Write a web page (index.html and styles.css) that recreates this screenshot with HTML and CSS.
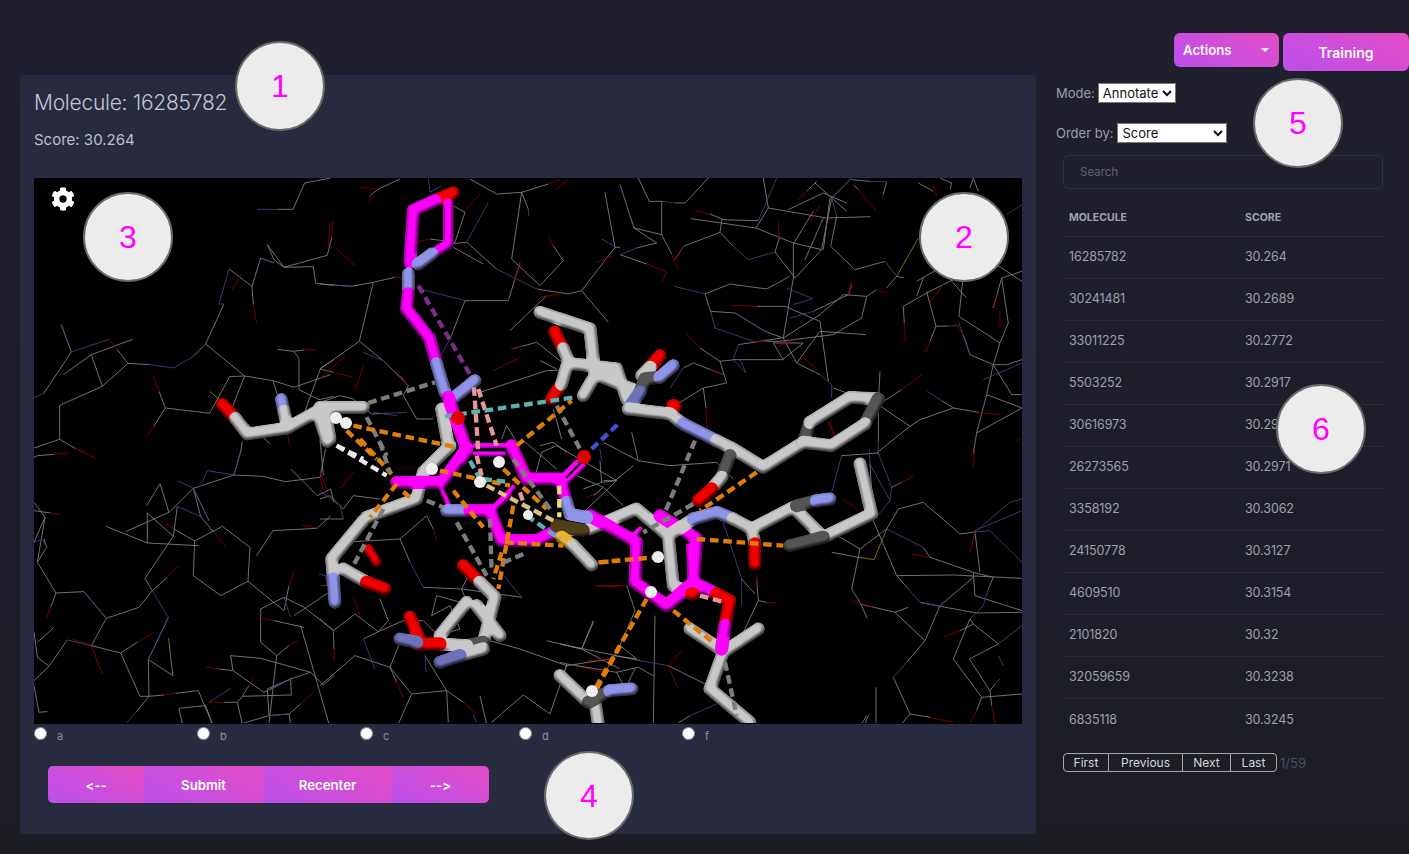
FILE: index.html
```html
<!DOCTYPE html>
<html lang="en">
<head>
<meta charset="utf-8">
<title>Molecule annotation</title>
<link rel="stylesheet" href="styles.css">
</head>
<body>
<div class="page">
  <main class="panel">
    <h1 class="title">Molecule: 16285782</h1>
    <p class="score">Score: 30.264</p>
    <div class="viewer">
      <svg class="scene" viewBox="34 179 988 545" width="988" height="545" aria-hidden="true">
        <defs>
          <filter id="tube" x="0" y="0" width="1409" height="854" filterUnits="userSpaceOnUse" color-interpolation-filters="sRGB">
            <feGaussianBlur in="SourceAlpha" stdDeviation="2.2" result="b"/>
            <feDiffuseLighting in="b" surfaceScale="4.5" diffuseConstant="1.12" lighting-color="#ffffff" result="s">
              <feDistantLight azimuth="250" elevation="72"/>
            </feDiffuseLighting>
            <feComposite in="s" in2="SourceGraphic" operator="arithmetic" k1="1" k2="0" k3="0" k4="0" result="lit"/>
            <feComposite in="lit" in2="SourceAlpha" operator="in"/>
          </filter>
        </defs>

        <!-- wireframe protein -->
        <g class="wires">
          <g transform="translate(34 179) scale(.3333)">
            <path class="w" d="M730 94H777L812 15L890 0M700 200L750 268L880 232L893 180M700 200L720 245L750 268L838 266L845 316L900 322M720 255L680 240M654 325L585 273M654 325L680 240M654 325L658 380M570 378L515 498L478 535M515 498L632 594L590 700M632 594L587 596L527 706L394 690L360 745M394 690L375 640M632 594L717 608L780 628L860 600L890 590M717 608L730 650M730 514L778 520L795 540L795 635L855 665L900 655M778 520L810 516M345 560L282 556L205 625L172 530L296 484M172 530L88 590M205 625L77 682L77 784L0 810M77 784L125 812M282 556L250 515M112 522L82 440M112 522L60 600L30 645M860 570L800 735M860 570L900 545M527 640L710 798M625 790L620 825"/>
            <path class="b" d="M670 94H730M680 240L720 255M585 273L555 378L570 378M345 560L420 570L478 535M225 484L112 522M82 440L100 490M30 645L0 660M77 682L130 660"/>
            <path class="r" d="M893 180L898 130M622 288L595 335M658 380L668 437M250 515L225 484M125 812L150 825M360 745L335 778M375 640L358 595M810 516L845 514M760 760L767 805"/>
          </g>
          <g transform="translate(34 450) scale(.3333)">
            <path class="w" d="M0 25L10 20L60 16M0 160L33 205L10 340L66 432L150 428L217 508L315 475L355 425L400 385M0 185L50 192M33 205L0 280M10 340L38 295L30 270M66 432L50 475M217 508L172 590M172 590L260 612L310 580M260 612L318 742L345 742L390 738M425 733L493 725L535 825M345 742L343 632L403 505M343 632L417 680L410 625M355 425L333 388L418 262L430 172M500 203L540 250M500 203L478 118L525 215M478 118L600 78L622 0M600 78L685 82L755 98L858 85L875 0M770 60L850 140L890 120L900 160M478 118L405 190L378 104L338 170M405 190L277 247M340 192L340 282L216 232M340 282L493 290M340 192L418 262M420 240L482 276L565 232L648 295L642 397L560 440L478 380L482 276M642 397L750 485L765 410M750 445L680 480L680 580L728 620L705 825M720 515L810 535M728 620L765 590M750 445L810 475L900 545M800 530L885 825M780 500L900 420M668 320L717 245L850 238L890 200M590 620L680 628L830 670L868 708L900 680M590 620L597 665L555 660M597 665L690 730L770 690L772 738L625 742L645 710M625 742L610 760L570 760M610 760L625 825M515 770L435 778L445 825M515 770L535 825M770 690L700 720L705 800L765 795L770 825M705 800L620 825M765 795L800 765M830 670L770 690M0 548L10 625L45 652L100 573M45 652L0 695M10 580L60 535M0 710L15 790L40 788M345 742L305 790"/>
            <path class="b" d="M430 172L500 203M430 95L478 118L525 215M505 100L520 65L600 78M622 0L600 78M150 428L217 508M355 425L403 505M403 505L343 632M100 573L172 590M0 280L25 270L38 295M855 375L875 380L880 410L860 410M750 445L770 505M700 720L770 690M705 800L765 795M525 760L590 718M305 790L275 825"/>
            <path class="r" d="M60 16L105 12M130 0L185 28M50 192L80 198M400 385L432 352M50 475L38 507M172 590L115 570M310 580L358 550M390 738L425 733M395 226L420 240M540 250L577 295M765 410L782 362M675 505L720 515M765 590L790 575M850 238L805 228M858 85L873 140M555 660L515 655M645 710L660 685M570 760L525 760M800 765L835 735M172 590L205 675"/>
            <path class="g" d="M410 625L404 567"/>
          </g>
          <g transform="translate(320 180) scale(.3333)">
            <path class="w" d="M0 315L95 322L160 310L225 295M160 310L118 487L0 570M118 487L190 545L265 620L250 650L290 720L340 720M175 30L240 0M175 30L150 50M530 45L605 40L685 15M450 0L530 45M605 40L575 240M605 40L625 90M385 195L440 190L530 270M650 330L745 345L785 335L865 430M785 335L885 205L855 40M885 205L900 205M400 205L490 255M435 100L405 190L330 180M435 100L380 70M575 240L660 320L730 245L700 200M600 250L565 365L435 365M435 365L390 480M570 455L680 350M0 570L40 580M575 510L650 490L720 545L900 590M660 545L710 570M480 640L680 575L820 570M100 660L155 705L200 703M660 800L700 790L740 820M700 690L725 780M545 780L560 740L590 790M240 590L265 620M0 670L60 650L100 660"/>
            <path class="b" d="M325 0L330 40L365 20M625 90L627 112M530 270L650 330M505 70L440 190M435 365L300 330M390 480L365 525M200 703L260 700M95 322L40 318M190 545L130 520M160 700L230 710M845 180L890 205"/>
            <path class="r" d="M175 30L120 25M150 50L150 70M685 15L720 0M745 0L710 30M330 180L270 195M480 45L430 100M600 250L580 310M700 200L685 175M660 355L720 345M40 580L100 595M75 530L0 600M130 560L105 635M225 575L265 620M520 575L600 535M610 500L575 510M30 130L25 200M50 208L105 260M225 292L245 298M830 250L880 230"/>
          </g>
          <g transform="translate(320 440) scale(.3333)">
            <path class="w" d="M0 0L10 110M0 180L30 170L70 210L100 170L180 180M240 300L70 310M240 300L320 230L340 270M240 300L270 370M310 445L425 450L605 475M425 450L455 390M425 450L440 490M350 470L335 530L390 500L420 570L355 590M350 470L440 495M0 540L40 575L105 525L175 578L250 545L310 545L345 580M40 575L42 630M175 578L205 545L180 480M130 600L175 578M105 650L0 740M105 650L210 685L240 610M210 685L230 730M210 685L275 765L380 755L315 650M380 755L430 790M275 765L235 855M380 755L385 850M490 600L600 630L740 680L870 660M740 680L690 825L610 768L515 850M480 770L500 855M680 605L785 630L820 545M785 630L900 690M605 0L710 90M640 130L665 40L710 20L830 90L890 125M790 150L845 130L890 125L780 230M840 65L845 130M0 240L70 240"/>
            <path class="b" d="M0 155L60 200L70 240M270 370L310 445M130 600L165 690M520 370L605 475M315 650L318 700M840 30L845 65M460 825L470 850"/>
            <path class="r" d="M0 100L20 150M100 100L60 150M340 270L350 305M455 390L475 350M42 630L42 665M230 730L250 775M430 790L470 825M100 475L120 530M770 680L850 700M800 665L870 660M830 440L900 445M800 175L835 160"/>
          </g>
          <g transform="translate(560 300) scale(.3333)">
            <path class="w" d="M130 430L235 485L330 500L470 490L520 540M235 485L215 400M130 545L165 545L220 500M130 565L190 620M100 590L130 565L50 530M545 840L585 885M590 840L595 905L620 910M595 905L550 1000M285 950L280 1275M100 970L65 1050L0 1035L240 1085M325 1100L435 1155M170 1120L235 1105L280 1130M200 860L225 935L180 1040L230 1080L160 1070M180 1040L130 1130M20 1095L170 1120L195 1170L225 1110M0 1090L20 1095L5 1150M390 1250L350 1275M915 1275L925 1250"/>
            <path class="b" d="M480 640L545 840L545 920M240 1085L325 1100M470 1215L390 1250"/>
            <path class="r" d="M620 910L650 912M200 860L105 860M325 1100L355 1170M325 1100L365 1055M810 370L825 415M590 830L590 860"/>
          </g>
          <g transform="translate(620 179) scale(.3333)">
            <path class="w" d="M55 0L88 70L125 70M165 75L195 75L265 0M0 20L42 150L125 170L125 70M42 150L110 195L50 210M0 230L80 258M125 170L155 228M190 205L165 245M190 205L300 163L305 125L415 128M212 122L408 150L445 90L430 0M270 108L310 125M445 90L620 120L752 116M408 150L520 195L605 215L635 60L695 0M300 163L340 205M465 222L478 180M465 222L525 300L605 215M520 195L520 300L490 480L600 410L670 350L740 355L725 420L640 470L480 490L440 490M255 348L330 318L440 333L510 295M255 348L272 400L345 405L435 460L490 480M410 385L495 385L600 430L625 610M580 400L685 350L695 320M705 275L795 250M705 275L632 205L650 115M490 480L530 555L600 590M485 480L355 500M340 545L488 545L550 495L460 495L490 545M600 460L738 470M600 460L530 555M240 510L300 550L345 545M300 550L320 615L250 630L120 710M190 570L220 555L310 590M250 630L258 690M640 630L775 680L780 580M775 680L845 635M775 680L870 745L900 725L1000 690L1075 703M870 745L770 825M1000 690L965 668M775 700L775 790M740 355L770 335M850 385L920 345L1030 290M850 385L853 435M830 295L850 300M800 330L830 295M920 340L948 445L985 444M948 445L930 490M1030 290L1017 415L1140 495L1165 435L1145 300L1206 280M1140 495L1120 560L1050 530L1030 470M1120 560L1160 560L1206 545M1120 560L1100 650L1206 690M1100 650L1070 765L1060 825M1070 765L1206 690M1120 560L1175 650L1206 650M895 15L940 40M1050 30L1060 0L1075 40M990 35L995 15L960 0M590 10L560 40M585 15L680 100M505 95L610 45L680 75M630 60L610 215M695 5L750 10M800 12L790 50M700 20L715 35M580 100L522 195M610 120L555 245M890 310L960 270L1040 360M890 355L910 300M1130 260L1206 310M1120 390L1145 300"/>
            <path class="b" d="M125 70L165 75M0 20L20 80M50 210L0 230M415 128L470 0M340 205L385 245L465 222M162 325L255 348M345 405L435 460M272 400L285 450L400 490M500 330L578 362L520 380M510 420L580 400M355 500L340 545L378 585L360 545M600 590L635 620L635 660M635 60L650 115M750 10L800 12M795 250L830 295M985 444L1015 443M1015 430L1050 530M1090 605L1206 555M1120 560L1110 565M922 640L965 668M190 570L150 630M1206 80L1160 110M775 790L775 825"/>
            <path class="r" d="M80 258L140 282M155 228L175 278M165 245L190 205M140 282L125 315M225 97L270 108M478 180L475 130M335 382L410 385M400 490L440 490M475 505L520 485M540 530L592 575M198 465L240 510M270 575L310 590M258 690L262 750M845 635L905 590M1075 703L1140 710M625 730L645 780M685 350L695 310M770 335L800 345M853 435L857 490M930 490L915 525M925 380L970 320M1003 430L1030 470M1118 390L1135 345M1140 400L1140 450M598 85L570 130M535 65L560 40M715 35L770 100M790 50L785 62M940 20L950 55M1200 780L1190 790"/>
            <path class="g" d="M830 295L895 180"/>
          </g>
          <g transform="translate(780 450) scale(.3333)">
            <path class="w" d="M185 20L295 12M335 115L365 100M270 45L280 215L350 380L385 420M355 180L430 160L540 255L590 248M355 180L320 240L240 300L215 420L240 460L262 508M175 262L240 300M155 310L235 325M430 295L450 325L580 370L640 385L625 420M350 380L520 378L726 388M580 370L585 440L726 485M420 460L480 472M480 472L590 492L726 490M580 385L480 470L435 575L380 640M340 685L390 795L450 805M240 465L345 490L385 475M345 490L435 575M570 510L520 630L605 745L590 785M570 510L580 525L540 545M580 525L655 585L568 630L630 725L645 705M630 725L635 770M605 745L726 735M288 715L288 825M260 800L245 825M390 795L365 825M585 250L600 370"/>
            <path class="b" d="M185 20L155 130M268 0L270 45L330 155L335 115L295 12M330 155L280 215M320 240L430 295M385 420L420 460L480 472M380 640L340 685M590 248L630 245L726 340M585 245L726 185M595 240L690 160L726 150M625 420L610 470L570 510M655 585L726 530M655 620L670 650M645 705L660 690"/>
            <path class="r" d="M365 100L400 82M190 150L235 185M395 315L450 325M215 455L280 475M585 250L570 310M540 545L490 565M450 805L520 820M590 785L570 825M635 770L645 825M585 0L578 55"/>
            <path class="g" d="M320 240L282 332L235 325"/>
          </g>
        </g>

        <!-- stick model -->
        <g class="model" filter="url(#tube)">
          <g transform="translate(560 300) scale(.3333)">
            <path class="c" d="M90 690L230 630L325 710"/>
            <path class="c" d="M325 710L340 860L395 885"/>
            <path class="c" d="M595 990L490 1060L450 1170L570 1270M390 990L480 1050"/>
            <path class="m" d="M90 650L230 730L225 850L320 920L400 850L410 720L300 650"/>
            <path class="m thin" d="M385 740L390 835M240 690L215 715"/>
            <path class="m" d="M400 850L470 885M320 920L370 880"/>
            <path class="o" d="M470 885L510 905L495 980"/>
            <path class="m" d="M495 980L485 1050"/>
            <path class="c" d="M325 710L400 660"/>
            <path class="n" d="M400 660L470 640L520 660"/>
            <path class="c" d="M520 660L575 690L700 625L790 715L935 645L900 495M575 690L585 735M0 700L40 690"/>
            <path class="o" d="M585 735L585 795"/>
            <path class="d" d="M790 715L690 740M710 620L770 605"/>
            <path class="n" d="M770 605L810 600"/>
            <path class="o" d="M395 885L400 885M300 170L270 205"/>
            <path class="c" d="M0 60L90 90L105 225M40 195L170 210L200 300M105 225L240 280M270 205L245 230"/>
            <path class="d" d="M240 280L255 240L300 235"/>
            <path class="n" d="M300 235L340 200"/>
            <path class="o small" d="M340 320L345 322"/>
            <path class="n dim" d="M240 280L205 330"/>
            <path class="c" d="M205 330L330 345L370 375"/>
            <path class="n" d="M370 375L470 425"/>
            <path class="c" d="M470 425L520 450L610 505L730 430"/>
            <path class="d" d="M730 430L750 370"/>
            <path class="c" d="M750 370L870 295L955 300"/>
            <path class="d" d="M955 300L915 375"/>
            <path class="c" d="M915 375L815 440L730 430"/>
            <path class="d" d="M510 470L485 535"/>
            <path class="c" d="M485 535L455 570"/>
            <path class="o" d="M455 570L415 605"/>
            <path class="c" d="M0 1130L85 1210M105 1210L115 1275"/>
            <path class="d" d="M85 1210L150 1175"/>
            <path class="n" d="M150 1175L215 1170"/>
          </g>
          <g transform="translate(320 440) scale(.3333)">
            <path class="c" d="M130 245L35 360L40 420"/>
            <path class="n" d="M40 420L45 490"/>
            <path class="o small2" d="M145 330L170 370"/>
            <path class="c" d="M70 390L140 430"/>
            <path class="o" d="M140 430L195 450"/>
            <path class="c" d="M140 235L290 180L310 100L390 20"/>
            <path class="c" d="M440 490L360 590M470 500L540 590"/>
            <path class="o" d="M430 380L480 430"/>
            <path class="c" d="M480 430L525 475L490 610"/>
            <path class="d" d="M490 610L440 620"/>
            <path class="c" d="M440 620L360 615"/>
            <path class="o" d="M270 535L295 590M360 615L290 615"/>
            <path class="n dim" d="M240 600L290 610"/>
            <path class="c" d="M490 630L420 650"/>
            <path class="n dim" d="M420 650L360 670"/>
            <path class="m" d="M230 130L365 130L440 30"/>
            <path class="m thin" d="M465 20L575 20M465 45L550 45M360 140L385 195M510 215L580 145M530 205L570 170"/>
            <path class="m" d="M575 20L620 120L720 120L740 190M510 215L545 305M545 305L650 305L700 280"/>
            <path class="n" d="M380 215L450 215"/>
            <path class="m" d="M450 215L510 215"/>
            <path class="m thin" d="M720 120L770 70M735 135L790 80"/>
            <path class="n" d="M740 190L750 225L800 235"/>
            <path class="brown" d="M710 260L790 275"/>
            <path class="gold" d="M725 295L760 320"/>
            <path class="c" d="M760 320L815 378"/>
          </g>
          <g transform="translate(320 180) scale(.3333)">
            <path class="c" d="M660 400L810 450L825 590"/>
            <path class="c" d="M825 590L790 650"/>
            <path class="o" d="M705 460L730 510M725 615L695 660"/>
            <path class="c" d="M730 510L745 545L725 615"/>
            <path class="c" d="M365 690L385 800"/>
            <path class="c" d="M0 685L130 685M15 690L30 780"/>
            <path class="o" d="M400 42L345 65"/>
            <path class="m" d="M345 65L280 95L270 250"/>
            <path class="m thin2" d="M385 75L385 195L330 230"/>
            <path class="n" d="M335 225L295 255M265 285L265 330"/>
            <path class="m" d="M265 345L260 390L330 480L350 555"/>
            <path class="n" d="M350 555L375 640M410 650L465 605"/>
            <path class="m" d="M385 655L440 810L425 840"/>
          </g>
          <g transform="translate(34 179) scale(.3333)">
            <path class="o" d="M565 680L605 722"/>
            <path class="c" d="M605 722L640 768L760 750L850 700L880 790"/>
            <path class="n" d="M742 665L750 700"/>
            <path class="c" d="M750 700L760 750"/>
          </g>
        </g>

        <!-- dashed contacts -->
        <g class="dashes">
          <g transform="translate(320 180) scale(.3333)">
            <path class="dash purple" d="M295 320L455 595"/>
            <path class="dash pink" d="M462 625L475 820M475 630L530 800"/>
            <path class="dash teal" d="M375 712L765 655"/>
            <path class="dash grey" d="M145 672L345 610M140 715L200 830M710 680L780 810"/>
            <path class="dash orange" d="M100 740L410 805M590 800L755 665M80 755L170 840"/>
            <path class="dash white" d="M50 800L130 840"/>
            <path class="dash blue" d="M815 810L900 730"/>
          </g>
          <g transform="translate(320 440) scale(.3333)">
            <path class="dash orange" d="M120 0L215 105M230 135L150 235M360 95L570 140M400 155L490 265M580 200L535 450M555 310L730 320M545 340L520 420M550 90L680 210M840 370L900 365M900 620L820 770M270 175L240 150"/>
            <path class="dash grey" d="M180 10L210 100M320 185L370 205M410 250L500 410M190 210L100 380M510 240L515 400M610 345L540 375M580 60L690 210"/>
            <path class="dash white" d="M50 20L200 110"/>
            <path class="dash tan" d="M500 140L700 245"/>
            <path class="dash teal" d="M450 65L480 120M490 120L570 130M620 230L720 300"/>
            <path class="dash pink" d="M470 50L485 110M600 160L610 190"/>
            <path class="dash yellow" d="M718 140L718 235"/>
          </g>
          <g transform="translate(560 300) scale(.3333)">
            <path class="dash grey" d="M405 425L315 640M400 615L250 700M495 1090L530 1250"/>
            <path class="dash orange" d="M590 520L420 635M410 720L670 740M115 790L285 775M260 900L105 1170M340 935L465 1035"/>
            <path class="dash pink" d="M420 890L495 910"/>
          </g>
        </g>

        <!-- atoms -->
        <g class="atoms">
          <circle class="h" cx="336" cy="419" r="6"/>
          <circle class="h" cx="346" cy="424" r="6"/>
          <circle class="h" cx="432" cy="470" r="6"/>
          <circle class="h" cx="480" cy="483" r="6"/>
          <circle class="h" cx="499" cy="463" r="6"/>
          <circle class="h" cx="528" cy="516" r="5"/>
          <circle class="h" cx="658" cy="558" r="6"/>
          <circle class="h" cx="651" cy="593" r="6"/>
          <circle class="h" cx="592" cy="692" r="6"/>
          <circle class="ox" cx="458" cy="419" r="7"/>
          <circle class="ox" cx="584" cy="458" r="7"/>
        </g>
      </svg>
      <svg class="gear" viewBox="0 0 512 512" width="24" height="24" aria-hidden="true">
        <path d="M487.4 315.7l-42.6-24.6c4.3-23.2 4.3-47 0-70.2l42.6-24.6c4.9-2.8 7.1-8.6 5.5-14-11.1-35.6-30-67.8-54.7-94.6-3.8-4.1-10-5.1-14.8-2.3L380.8 110c-17.9-15.4-38.5-27.3-60.8-35.1V25.8c0-5.6-3.9-10.5-9.4-11.7-36.7-8.2-74.3-7.8-109.2 0-5.5 1.2-9.4 6.1-9.4 11.7V75c-22.2 7.9-42.8 19.8-60.8 35.1L88.7 85.5c-4.9-2.8-11-1.9-14.8 2.3-24.7 26.7-43.6 58.9-54.7 94.6-1.7 5.4.6 11.2 5.5 14L67.3 221c-4.3 23.2-4.3 47 0 70.2l-42.6 24.6c-4.9 2.8-7.1 8.6-5.5 14 11.1 35.6 30 67.8 54.7 94.6 3.8 4.1 10 5.1 14.8 2.3l42.6-24.6c17.9 15.4 38.5 27.3 60.8 35.1v49.2c0 5.6 3.9 10.5 9.4 11.7 36.7 8.2 74.3 7.8 109.2 0 5.5-1.2 9.4-6.1 9.4-11.7v-49.2c22.2-7.9 42.8-19.8 60.8-35.1l42.6 24.6c4.9 2.8 11 1.9 14.8-2.3 24.7-26.7 43.6-58.9 54.7-94.6 1.5-5.5-.7-11.3-5.6-14.1zM256 336c-44.1 0-80-35.9-80-80s35.9-80 80-80 80 35.9 80 80-35.9 80-80 80z"/>
      </svg>
    </div>
    <div class="choices">
      <label class="choice"><input type="radio" name="answer"><span>a</span></label>
      <label class="choice"><input type="radio" name="answer"><span>b</span></label>
      <label class="choice choice-narrow"><input type="radio" name="answer"><span>c</span></label>
      <label class="choice"><input type="radio" name="answer"><span>d</span></label>
      <label class="choice"><input type="radio" name="answer"><span>f</span></label>
    </div>
    <div class="btn-group">
      <button class="seg seg-prev">&lt;--</button>
      <button class="seg seg-submit">Submit</button>
      <button class="seg seg-recenter">Recenter</button>
      <button class="seg seg-next">--&gt;</button>
    </div>
  </main>

  <aside class="side">
    <div class="top-actions">
      <button class="grad-btn actions">Actions<span class="caret"></span></button>
      <button class="grad-btn training">Training</button>
    </div>
    <div class="field field-mode">
      <label>Mode:</label>
      <select class="sel sel-mode"><option>Annotate</option></select>
    </div>
    <div class="field field-order">
      <label>Order by:</label>
      <select class="sel sel-order"><option>Score</option></select>
    </div>
    <input class="search" type="text" placeholder="Search">
    <table class="list">
      <thead><tr><th class="col-id">MOLECULE</th><th>SCORE</th></tr></thead>
      <tbody>
        <tr><td>16285782</td><td>30.264</td></tr>
        <tr><td>30241481</td><td>30.2689</td></tr>
        <tr><td>33011225</td><td>30.2772</td></tr>
        <tr><td>5503252</td><td>30.2917</td></tr>
        <tr><td>30616973</td><td>30.2967</td></tr>
        <tr><td>26273565</td><td>30.2971</td></tr>
        <tr><td>3358192</td><td>30.3062</td></tr>
        <tr><td>24150778</td><td>30.3127</td></tr>
        <tr><td>4609510</td><td>30.3154</td></tr>
        <tr><td>2101820</td><td>30.32</td></tr>
        <tr><td>32059659</td><td>30.3238</td></tr>
        <tr><td>6835118</td><td>30.3245</td></tr>
      </tbody>
    </table>
    <div class="pager">
      <div class="pager-btns">
        <button class="pg pg-first">First</button><button class="pg pg-prev">Previous</button><button class="pg pg-next">Next</button><button class="pg pg-last">Last</button>
      </div>
      <span class="pager-count">1/59</span>
    </div>
  </aside>

  <div class="mark mark-1">1</div>
  <div class="mark mark-2">2</div>
  <div class="mark mark-3">3</div>
  <div class="mark mark-4">4</div>
  <div class="mark mark-5">5</div>
  <div class="mark mark-6">6</div>
</div>
</body>
</html>
```
FILE: styles.css
```css
* { box-sizing: border-box; }
html, body { margin: 0; height: 100%; }
body {
  background: linear-gradient(180deg, #1f1f2d 0%, #1e1e2a 70%, #1c1c23 100%);
  font-family: Inter, "Noto Sans", "Liberation Sans", sans-serif;
  font-variant-ligatures: none;
  font-feature-settings: "calt" 0, "liga" 0;
  color: #b9bbc6;
  overflow: hidden;
}
.page {
  position: relative;
  width: 1409px;
  height: 854px;
  display: flex;
  align-items: flex-start;
  padding: 75px 0 0 20px;
}
.panel {
  width: 1016px;
  height: 759px;
  background: #282b3f;
  border-radius: 4px;
  padding: 14px 14px 0;
  flex: none;
}
.title {
  margin: 0;
  font-size: 21px;
  line-height: 28px;
  font-weight: 300;
  letter-spacing: -.25px;
  color: #c4c6d2;
}
.score {
  margin: 12px 0 0;
  font-size: 15px;
  line-height: 22px;
  color: #bcbec9;
}
.viewer {
  position: relative;
  margin-top: 27px;
  width: 988px;
  height: 546px;
  background: #000;
  overflow: hidden;
}
.scene { display: block; }
.gear {
  position: absolute;
  left: 17px;
  top: 9px;
  fill: #fff;
}
.wires path { fill: none; stroke-width: 2.7; stroke-linejoin: round; }
.wires .w { stroke: #7d7d7d; }
.wires .b { stroke: #40407c; }
.wires .r { stroke: #850000; }
.wires .g { stroke: #8a7322; }
.model path { fill: none; stroke-width: 40; stroke-linecap: round; stroke-linejoin: round; }
.model .c { stroke: #c8c8c8; }
.model .m { stroke: #ff00ff; }
.model .n { stroke: #8f94e8; }
.model .dim { stroke: #6e72b8; }
.model .o { stroke: #f00000; }
.model .d { stroke: #555555; }
.model .brown { stroke: #4f4019; }
.model .gold { stroke: #ecb234; }
.model .thin { stroke-width: 16; }
.model .thin2 { stroke-width: 33; }
.model .small { stroke-width: 42; }
.model .small2 { stroke-width: 30; }
.dash { fill: none; stroke-width: 13; stroke-dasharray: 26 14; }
.orange { stroke: #e07c08; }
.grey { stroke: #7d7d7d; }
.white { stroke: #e8e8e8; }
.teal { stroke: #5cb0b0; }
.pink { stroke: #e89898; }
.purple { stroke: #7a2e85; }
.blue { stroke: #3f51d8; }
.tan { stroke: #e0c080; }
.yellow { stroke: #e8e070; }
.atoms .h { fill: #eeeeee; }
.atoms .ox { fill: #e00000; }

.choices {
  display: flex;
  height: 20px;
  align-items: center;
  padding-top: 1px;
}
.choice {
  width: 163px;
  display: flex;
  align-items: center;
  gap: 10px;
  font-size: 11px;
  color: #8b8e9e;
}
.choice span { position: relative; top: 1px; }
.choice-narrow { width: 159px; }
.choice input {
  margin: 0;
  width: 13px;
  height: 13px;
  position: relative;
  top: -1px;
  accent-color: #fff;
}
.btn-group {
  display: flex;
  margin: 22px 0 0 14px;
  width: 441px;
  height: 37px;
  border-radius: 5px;
  overflow: hidden;
}
.seg, .grad-btn {
  border: 0;
  color: #fff;
  font-family: inherit;
  font-feature-settings: "calt" 0, "liga" 0;
  font-variant-ligatures: none;
  font-weight: 600;
  font-size: 13.2px;
  background: linear-gradient(30deg, #bb50ec 0%, #e34cc5 100%);
}
.seg-prev { width: 96px; }
.seg-submit { width: 119px; }
.seg-recenter { width: 129px; }
.seg-next { width: 97px; }

.side {
  width: 373px;
  flex: none;
  margin-top: -42px;
  padding-left: 20px;
  font-size: 13px;
}
.top-actions {
  display: flex;
  justify-content: flex-end;
  align-items: flex-start;
  gap: 4px;
  height: 38px;
}
.grad-btn { border-radius: 6px; font-size: 13.2px; }
.actions {
  position: relative;
  width: 105px;
  height: 34px;
  text-align: left;
  padding: 0 0 0 9px;
}
.caret {
  position: absolute;
  right: 10px;
  top: 15px;
  border-top: 4px solid #fff;
  border-left: 4px solid transparent;
  border-right: 4px solid transparent;
}
.training { width: 126px; height: 38px; font-size: 14px; }
.field {
  display: flex;
  align-items: center;
  gap: 3px;
  height: 20px;
  color: #9c9eab;
  font-size: 13px;
}
.field-mode { margin-top: 12px; }
.field-order { margin-top: 20px; gap: 4px; }
.sel {
  height: 20px;
  background: #fff;
  color: #111;
  border: 1px solid #777;
  font-family: inherit;
  font-size: 13px;
  padding: 0;
}
.sel-mode { width: 78px; }
.sel-order { width: 110px; }
.search {
  display: block;
  margin: 12px 0 0 7px;
  width: 320px;
  height: 34px;
  background: transparent;
  border: 1px solid #2b2f47;
  border-radius: 6px;
  padding: 0 16px;
  font-family: inherit;
  font-size: 11.5px;
  color: #9c9eab;
}
.search::placeholder { color: #5f6170; opacity: 1; }
.list {
  margin: 8px 0 0 7px;
  width: 321px;
  border-collapse: separate;
  border-spacing: 0;
  table-layout: fixed;
}
.list th {
  height: 40px;
  text-align: left;
  font-size: 10.5px;
  font-weight: 700;
  color: #a0a2ae;
  padding: 2px 0 0 6px;
  border-bottom: 1px solid #2a2a36;
}
.list .col-id { width: 176px; }
.list td {
  height: 42px;
  padding: 0 0 2px 6px;
  font-size: 12.5px;
  letter-spacing: -.1px;
  color: #9d9fa9;
  border-bottom: 1px solid #2a2a36;
}
.list tr:last-child td { border-bottom: 0; }
.pager {
  display: flex;
  align-items: center;
  margin: 12px 0 0 7px;
  gap: 3px;
}
.pager-btns {
  display: flex;
  width: 214px;
  height: 19px;
  border: 1px solid #a8a8ac;
  border-radius: 4px;
}
.pg {
  padding: 0;
  background: transparent;
  border: 0;
  border-right: 1px solid #a8a8ac;
  color: #d4d5da;
  font-family: inherit;
  font-size: 12px;
  line-height: 15px;
}
.pg-first { width: 45px; }
.pg-prev { width: 74px; }
.pg-next { width: 48px; }
.pg-last { flex: 1; border-right: 0; }
.pager-count { color: #474d6e; font-size: 13px; }

.mark {
  position: absolute;
  width: 90px;
  height: 90px;
  border-radius: 50%;
  background: #ececec;
  border: 2px solid #6a6a6a;
  color: #ff00ff;
  font-family: "Liberation Sans", sans-serif;
  font-size: 32px;
  display: flex;
  align-items: center;
  justify-content: center;
  padding-top: 1px;
}
.mark-1 { left: 235px; top: 41px; }
.mark-2 { left: 919px; top: 192px; }
.mark-3 { left: 83px; top: 192px; }
.mark-4 { left: 544px; top: 751px; width: 90px; height: 89px; }
.mark-5 { left: 1253px; top: 78px; }
.mark-6 { left: 1276px; top: 384px; }
```
